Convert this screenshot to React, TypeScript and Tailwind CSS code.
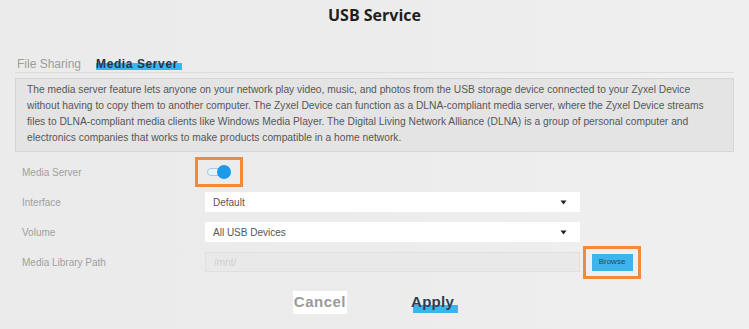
const descLines = [
  'The media server feature lets anyone on your network play video, music, and photos from the USB storage device connected to your Zyxel Device',
  'without having to copy them to another computer. The Zyxel Device can function as a DLNA-compliant media server, where the Zyxel Device streams',
  'files to DLNA-compliant media clients like Windows Media Player. The Digital Living Network Alliance (DLNA) is a group of personal computer and',
  'electronics companies that works to make products compatible in a home network.',
]

function Caret() {
  return (
    <svg width="7" height="5" viewBox="0 0 7 5" className="mr-[13px]">
      <path d="M0.5 0.5 L6.5 0.5 L3.5 4.5 Z" fill="#222" />
    </svg>
  )
}

function Row({ label, children }: { label: string; children: React.ReactNode }) {
  return (
    <div className="flex h-[30px] items-center">
      <div className="w-[190px] pl-[7px] text-[10px] text-[#a0a0a0]">{label}</div>
      {children}
    </div>
  )
}

export default function App() {
  return (
    <div className="w-[749px] h-[329px] overflow-hidden bg-gradient-to-r from-[#ebebeb] via-[#ececec] to-[#f0f0f0] font-['Liberation_Sans',sans-serif] flex flex-col">
      <div className="h-[30px] flex items-center justify-center">
        <h1 className="font-['Open_Sans',sans-serif] font-bold text-[16px] text-[#1f1f1f]">USB Service</h1>
      </div>

      <div className="mx-[15px] mt-[26px] h-[17px] flex items-end border-b border-[#dcdcdc]">
        <span className="text-[12px] leading-[16px] text-[#9d9d9d] pl-[2px]">File Sharing</span>
        <span className="ml-[15px] relative text-[12px] leading-[16px] font-bold tracking-[0.6px] text-[#2a3442]">
          <span className="absolute left-0 right-[-4px] bottom-[2px] h-[7px] bg-[#3bb5ec]" />
          <span className="relative">Media Server</span>
        </span>
      </div>

      <div className="mx-[15px] mt-[5px] h-[74px] border border-[#d6d6d6] bg-[#e4e4e4] pl-[11px] pt-[3px]">
        {descLines.map((l) => (
          <div key={l} className="whitespace-nowrap text-[10.25px] leading-[16px] text-[#575757]">{l}</div>
        ))}
      </div>

      <div className="mx-[15px] mt-[5px] flex flex-col">
        <Row label="Media Server">
          <div className="ml-[-10px] w-[48px] h-[30px] border-[3px] border-[#f08a3c] flex items-center justify-center">
            <div className="relative w-[24px] h-[12px]">
              <div className="absolute left-0 top-[2px] w-[18px] h-[8px] rounded-full border border-[#9fcbe8] bg-[#e9f3fa]" />
              <div className="absolute right-0 top-[-1px] w-[14px] h-[14px] rounded-full bg-[#1c9ae8]" />
            </div>
          </div>
        </Row>
        <Row label="Interface">
          <div className="w-[375px] h-[20px] bg-white flex items-center justify-between pl-[8px]">
            <span className="text-[10px] text-[#555]">Default</span>
            <Caret />
          </div>
        </Row>
        <Row label="Volume">
          <div className="w-[375px] h-[20px] bg-white flex items-center justify-between pl-[8px]">
            <span className="text-[10px] text-[#555]">All USB Devices</span>
            <Caret />
          </div>
        </Row>
        <Row label="Media Library Path">
          <div className="w-[375px] h-[20px] bg-[#e9e9e9] border border-[#e0e0e0] flex items-center pl-[8px]">
            <span className="text-[10px] text-[#cfcfcf]">/mnt/</span>
          </div>
          <div className="ml-[3px] w-[58px] h-[33px] border-[3px] border-[#f08a3c] flex items-center justify-center">
            <div className="w-[41px] h-[17px] bg-[#3db4ea] flex items-center justify-center text-[8px] text-[#24466a]">Browse</div>
          </div>
        </Row>
      </div>

      <div className="mt-[14px] flex items-center justify-center gap-[64px] pr-[2px]">
        <span className="bg-white px-[1px] text-[15px] font-bold text-[#9a9a9a] tracking-[0.5px]">Cancel</span>
        <span className="relative text-[15px] font-bold text-[#2e3e52] tracking-[0.3px]">
          <span className="absolute left-[2px] right-[-4px] bottom-[1px] h-[8px] bg-[#3bb5ec]" />
          <span className="relative">Apply</span>
        </span>
      </div>
    </div>
  )
}
